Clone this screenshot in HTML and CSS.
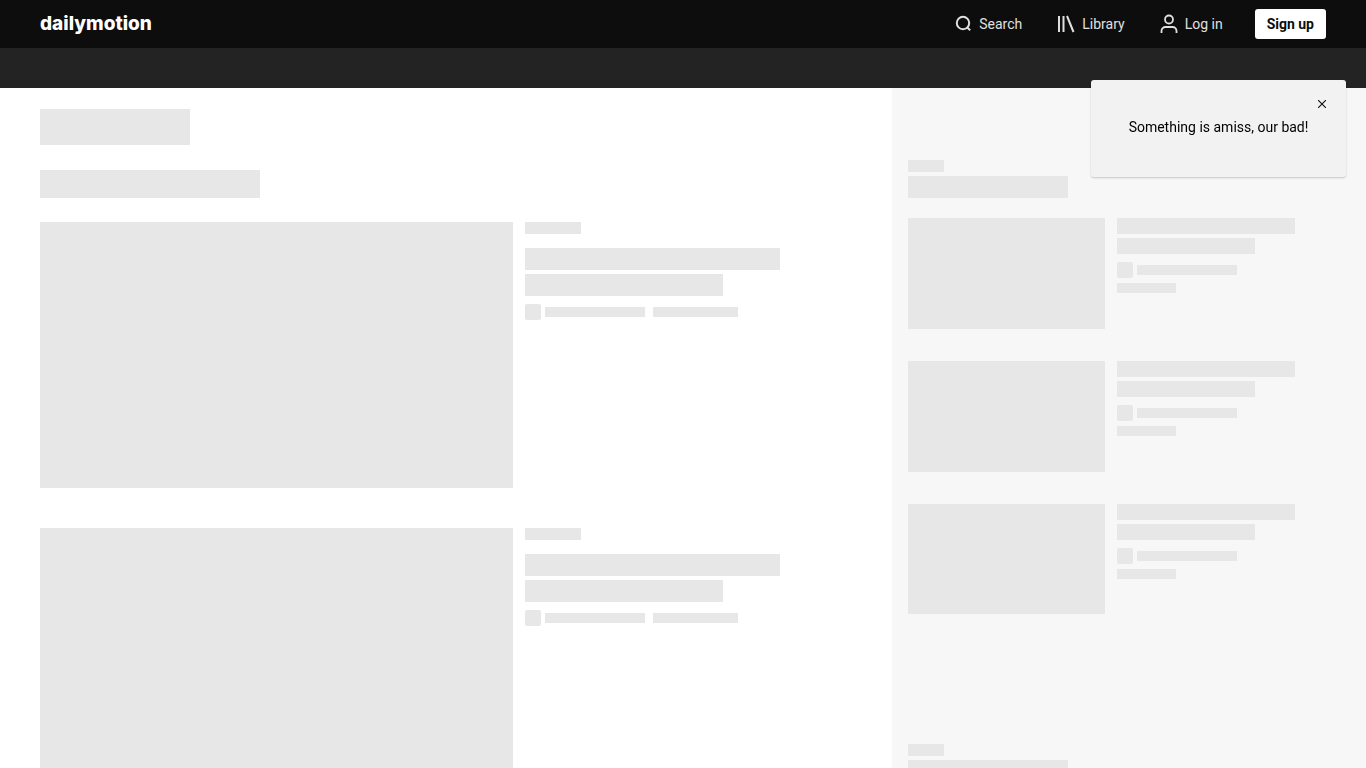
FILE: index.html
```html
<!DOCTYPE html>
<html lang="en">

<head>
    <meta charset="UTF-8">
    <meta name="viewport" content="width=device-width, initial-scale=1.0">
    <title>Dailymotion</title>
    <link rel="stylesheet" href="styles.css">
</head>

<body>
    <header class="header">
        <a href="#" class="logo">dailymotion</a>
        <nav class="nav">
            <a href="#" class="nav-link">
                <svg class="icon" width="24" height="24" viewBox="0 0 24 24" fill="none" stroke="currentColor" stroke-width="2">
                    <circle cx="12" cy="11" r="6.2"/>
                    <path d="M16 15.2l3.2 3"/>
                </svg>
                <span>Search</span>
            </a>
            <a href="#" class="nav-link">
                <svg class="icon" width="24" height="24" viewBox="0 0 24 24" fill="none" stroke="currentColor" stroke-width="2">
                    <path d="M5 4v16"/>
                    <path d="M9.5 4v16"/>
                    <path d="M13 4l6.5 16"/>
                </svg>
                <span>Library</span>
            </a>
            <a href="#" class="nav-link">
                <svg class="icon" width="24" height="24" viewBox="0 0 24 24" fill="none" stroke="currentColor" stroke-width="1.8">
                    <circle cx="12" cy="7.5" r="4"/>
                    <path d="M4.5 21v-2a4 4 0 0 1 4-4h7a4 4 0 0 1 4 4v2"/>
                </svg>
                <span>Log in</span>
            </a>
            <button type="button" class="signup">Sign up</button>
        </nav>
    </header>
    <div class="subnav"></div>

    <!-- Loading placeholders -->
    <div class="page">
        <main class="main">
            <div class="bone page-title"></div>
            <div class="bone section-title"></div>
            <div class="video">
                <div class="bone thumb"></div>
                <div class="info">
                    <div class="bone label"></div>
                    <div class="bone line"></div>
                    <div class="bone line short"></div>
                    <div class="channel">
                        <div class="bone avatar"></div>
                        <div class="bone name"></div>
                        <div class="bone date"></div>
                    </div>
                </div>
            </div>
            <div class="video">
                <div class="bone thumb"></div>
                <div class="info">
                    <div class="bone label"></div>
                    <div class="bone line"></div>
                    <div class="bone line short"></div>
                    <div class="channel">
                        <div class="bone avatar"></div>
                        <div class="bone name"></div>
                        <div class="bone date"></div>
                    </div>
                </div>
            </div>
        </main>

        <aside class="sidebar">
            <section class="side-section">
                <div class="bone side-label"></div>
                <div class="bone side-title"></div>
                <div class="side-video">
                    <div class="bone thumb"></div>
                    <div class="info">
                        <div class="bone line"></div>
                        <div class="bone line short"></div>
                        <div class="channel">
                            <div class="bone avatar"></div>
                            <div class="bone name"></div>
                        </div>
                        <div class="bone views"></div>
                    </div>
                </div>
                <div class="side-video">
                    <div class="bone thumb"></div>
                    <div class="info">
                        <div class="bone line"></div>
                        <div class="bone line short"></div>
                        <div class="channel">
                            <div class="bone avatar"></div>
                            <div class="bone name"></div>
                        </div>
                        <div class="bone views"></div>
                    </div>
                </div>
                <div class="side-video">
                    <div class="bone thumb"></div>
                    <div class="info">
                        <div class="bone line"></div>
                        <div class="bone line short"></div>
                        <div class="channel">
                            <div class="bone avatar"></div>
                            <div class="bone name"></div>
                        </div>
                        <div class="bone views"></div>
                    </div>
                </div>
            </section>
            <section class="side-section">
                <div class="bone side-label"></div>
                <div class="bone side-title"></div>
            </section>
        </aside>
    </div>

    <div class="toast" role="alert">
        <button type="button" class="toast-close" aria-label="Close">
            <svg class="icon" width="8" height="8" viewBox="0 0 8 8" stroke="currentColor" stroke-width="1.1">
                <path d="M0 0l8 8M8 0L0 8"/>
            </svg>
        </button>
        <p class="toast-text">Something is amiss, our bad!</p>
    </div>
</body>

</html>
```
FILE: styles.css
```css
* {
    box-sizing: border-box;
}

body {
    margin: 0;
    background-color: #fff;
    color: #0d0d0d;
    font-family: Roboto, "Noto Sans", sans-serif;
    font-size: 14px;
    line-height: 20px;
}

a {
    text-decoration: none;
    color: inherit;
}

.icon {
    display: block;
    flex: none;
}

/* Header */
.header {
    display: flex;
    align-items: center;
    justify-content: space-between;
    height: 48px;
    padding: 0 40px;
    background-color: #0d0d0d;
    color: #e0e0e0;
}

.logo {
    color: #fff;
    font-family: Inter, sans-serif;
    font-size: 19px;
    font-weight: 800;
}

.nav {
    display: flex;
    align-items: center;
    gap: 32px;
}

.nav-link {
    display: flex;
    align-items: center;
    gap: 4px;
}

.signup {
    height: 30px;
    padding: 0 12px;
    border: none;
    border-radius: 3px;
    background-color: #fff;
    color: #0d0d0d;
    font: inherit;
    font-weight: 700;
    cursor: pointer;
}

.subnav {
    height: 40px;
    background-color: #232323;
}

/* Placeholders */
.page {
    display: grid;
    grid-template-columns: 892fr 474fr;
}

.bone {
    background-color: #e7e7e7;
}

.main {
    padding: 21px 67px 0 40px;
}

.page-title {
    width: 150px;
    height: 36px;
    margin-bottom: 25px;
}

.section-title {
    width: 220px;
    height: 28px;
    margin-bottom: 24px;
}

.video {
    display: flex;
    gap: 12px;
    margin-bottom: 40px;
}

.thumb {
    aspect-ratio: 16 / 9;
    align-self: flex-start;
}

.video .thumb {
    flex: 473;
}

.video .info {
    flex: 300;
}

.label {
    width: 56px;
    height: 12px;
    margin-bottom: 14px;
}

.line {
    width: 85%;
    height: 22px;
    margin-bottom: 4px;
}

.short {
    width: 66%;
    margin-bottom: 8px;
}

.channel {
    display: flex;
    align-items: center;
}

.avatar {
    width: 16px;
    height: 16px;
    margin-right: 4px;
    border-radius: 2px;
}

.name {
    width: 100px;
    height: 10px;
    margin-right: 8px;
}

.date {
    width: 85px;
    height: 10px;
}

/* Sidebar */
.sidebar {
    padding: 72px 40px 0 16px;
    background-color: #f7f7f7;
}

.side-section {
    margin-bottom: 130px;
}

.side-label {
    width: 36px;
    height: 12px;
    margin-bottom: 4px;
}

.side-title {
    width: 160px;
    height: 22px;
    margin-bottom: 20px;
}

.side-video {
    display: flex;
    gap: 12px;
    margin-bottom: 32px;
}

.side-video .thumb {
    flex: 197;
}

.side-video .info {
    flex: 209;
}

.side-video .line {
    height: 16px;
}

.views {
    width: 28%;
    height: 10px;
    margin-top: 5px;
}

/* Error message */
.toast {
    position: fixed;
    top: 80px;
    right: 20px;
    width: 255px;
    padding: 37px 32px 40px;
    border-radius: 3px;
    background-color: #f2f2f2;
    box-shadow: 0 1px 2px rgba(0, 0, 0, 0.2);
    color: #000;
    text-align: center;
}

.toast-text {
    margin: 0;
}

.toast-close {
    position: absolute;
    top: 16px;
    right: 16px;
    padding: 4px;
    border: none;
    background: none;
    color: #0d0d0d;
    cursor: pointer;
}
```
